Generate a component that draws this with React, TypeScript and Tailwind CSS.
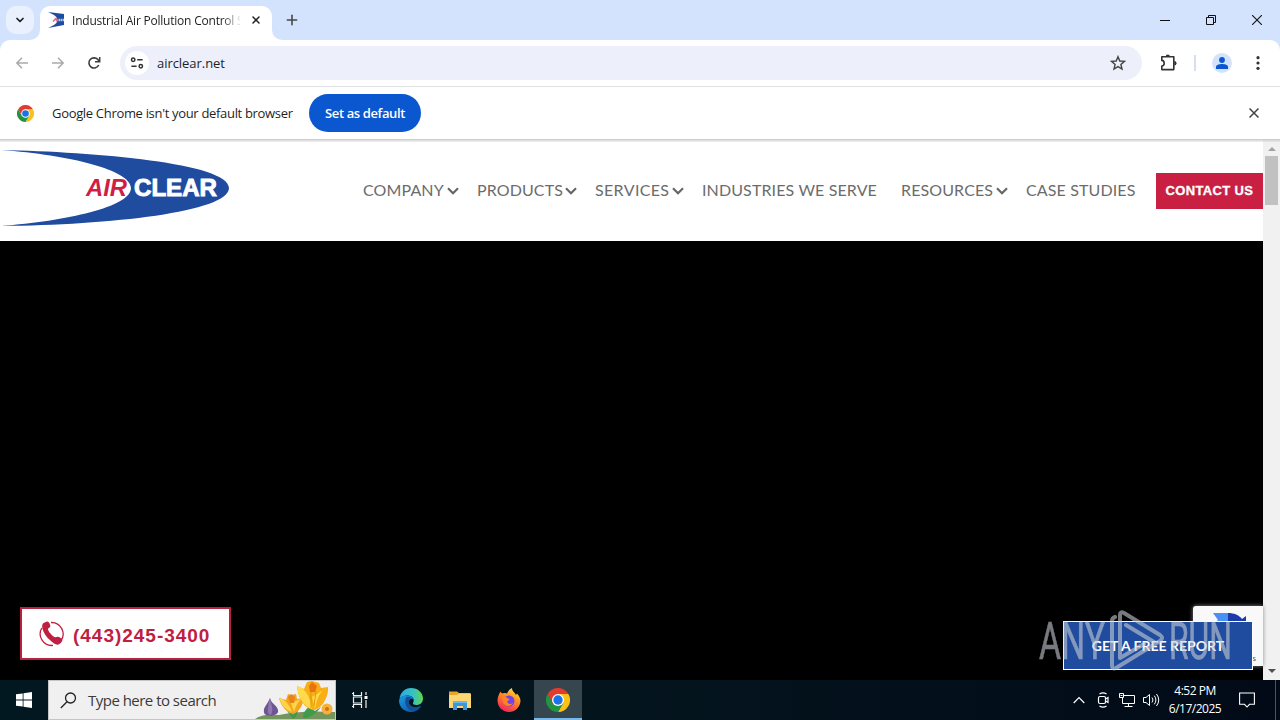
import { ChevronDown, Plus, X } from 'lucide-react';

const NAV = [
  { label: 'COMPANY', menu: true, cell: 'w-[114px]', text: 'w-[82px]' },
  { label: 'PRODUCTS', menu: true, cell: 'w-[118px]', text: 'w-[86px]' },
  { label: 'SERVICES', menu: true, cell: 'w-[107px]', text: 'w-[75px] tracking-[0.35px]' },
  { label: 'INDUSTRIES WE SERVE', menu: false, cell: 'w-[199px]', text: 'w-[175px]' },
  { label: 'RESOURCES', menu: true, cell: 'w-[125px]', text: 'w-[93px]' },
  { label: 'CASE STUDIES', menu: false, cell: 'w-[130px]', text: 'w-[110px]' },
];

function AirClearMark({ className }: { className: string }) {
  return (
    <svg className={className} viewBox="0 0 230 78" preserveAspectRatio="none">
      <path d="M1 1C95 3 229 14 229 39C229 63 110 76 1 77C66 72 131 58 131 39C131 21 70 6 1 1Z" fill="#1f4c9f" />
      <text x="86" y="47" textLength="41" lengthAdjust="spacingAndGlyphs" fontFamily="Liberation Sans, sans-serif" fontSize="23" fontWeight="700" fontStyle="italic" fill="#d01f45">AIR</text>
      <text x="134" y="47" textLength="83" lengthAdjust="spacingAndGlyphs" fontFamily="Liberation Sans, sans-serif" fontSize="23" fontWeight="700" fill="#fff" stroke="#fff" strokeWidth=".9">CLEAR</text>
    </svg>
  );
}

function ChromeLogo({ className }: { className: string }) {
  return (
    <svg className={className} viewBox="0 0 48 48">
      <path d="M24 12H44.8A24 24 0 0 1 24 48L34.4 30Z" fill="#fbc116" />
      <path d="M13.6 30L3.2 12A24 24 0 0 0 24 48L34.4 30Z" fill="#229342" />
      <path d="M3.2 12A24 24 0 0 1 44.8 12H24L13.6 30Z" fill="#e33b2e" />
      <circle cx="24" cy="24" r="12" fill="#fff" />
      <circle cx="24" cy="24" r="9.4" fill="#1a73e8" />
    </svg>
  );
}

function TabStrip() {
  return (
    <div className="h-10 bg-[#d3e3fd] flex items-start">
      <div className="ml-1.5 mt-1.5 w-7 h-7 rounded-[10px] bg-[#e9f1fe] flex items-center justify-center">
        <ChevronDown className="w-3 h-3 text-[#1f1f1f]" strokeWidth={3.5} />
      </div>
      <div className="ml-1.5 mt-1.5 w-[232px] h-[34px] rounded-t-[10px] bg-white flex items-center relative">
        <svg className="absolute -left-2.5 bottom-0 w-2.5 h-2.5" viewBox="0 0 10 10"><path d="M10 0V10H0A10 10 0 0 0 10 0Z" fill="#fff" /></svg>
        <svg className="absolute -right-2.5 bottom-0 w-2.5 h-2.5" viewBox="0 0 10 10"><path d="M0 0V10H10A10 10 0 0 1 0 0Z" fill="#fff" /></svg>
        <svg className="ml-2 mb-1.5 w-4 h-4" viewBox="0 0 16 16">
          <path d="M0 0L16 2V13L0 16C6 13.5 9.5 11 9.5 8C9.5 5 6 2.5 0 0Z" fill="#1f4c9f" />
          <path d="M5 9.5L8 6.5L9 9.5" fill="none" stroke="#dd6b83" strokeWidth="1.6" />
          <path d="M10.5 8H16" stroke="#b9c8e8" strokeWidth="2.6" strokeDasharray="1.6 .5" />
        </svg>
        <div className="ml-2 mb-1 w-[168px] overflow-hidden whitespace-nowrap text-[12px] leading-4 tracking-[-0.22px] text-[#1f1f1f] [mask-image:linear-gradient(to_right,#000_150px,transparent_170px)]">
          Industrial Air Pollution Control Systems
        </div>
        <X className="ml-2.5 mb-1.5 w-3 h-3 text-[#1f1f1f]" strokeWidth={3} />
      </div>
      <Plus className="ml-3 mt-3 w-4 h-4 text-[#474747]" strokeWidth={2.4} />
      <div className="ml-auto flex items-center h-10 mr-[18px] gap-9">
        <svg className="w-2.5 h-2.5" viewBox="0 0 10 10"><path d="M0 5.5H10" stroke="#111" /></svg>
        <svg className="w-2.5 h-2.5" viewBox="0 0 10 10"><path d="M.5 2.5H7.5V9.5H.5ZM2.5 2.5V.5H9.5V7.5H7.5" fill="none" stroke="#111" /></svg>
        <svg className="w-2.5 h-2.5" viewBox="0 0 10 10"><path d="M0 0L10 10M10 0L0 10" stroke="#111" strokeWidth="1.1" /></svg>
      </div>
    </div>
  );
}

function Toolbar() {
  return (
    <div className="bg-[#d3e3fd]">
      <div className="h-[47px] bg-white rounded-t-[10px] border-b border-[#dfe1e5] flex items-center">
        <svg className="ml-4 w-3 h-3" viewBox="0 0 12 12"><path d="M12 6H1M6 .8L.9 6L6 11.2" fill="none" stroke="#a9abae" strokeWidth="1.5" /></svg>
        <svg className="ml-6 w-3 h-3" viewBox="0 0 12 12"><path d="M0 6H11M6 .8L11.1 6L6 11.2" fill="none" stroke="#a9abae" strokeWidth="1.5" /></svg>
        <svg className="ml-6 w-3 h-3 overflow-visible" viewBox="0 0 12 12">
          <path d="M10.7 8A5.1 5.1 0 1 1 9.9 2.6L11.6 4.3" fill="none" stroke="#3c3c3c" strokeWidth="1.6" />
          <path d="M11.7 0V4.7H7" fill="none" stroke="#3c3c3c" strokeWidth="1.5" />
        </svg>
        <div className="ml-5 w-[1022px] h-[34px] rounded-full bg-[#edf0fa] flex items-center">
          <div className="ml-[5px] w-6 h-6 rounded-full bg-white flex items-center justify-center">
            <svg className="w-3.5 h-3.5" viewBox="0 0 14 14" fill="none" stroke="#333" strokeWidth="1.5">
              <circle cx="3.2" cy="3.8" r="1.7" /><path d="M7.2 3.8H12.6M1.4 10.2H6.6" /><circle cx="10.8" cy="10.2" r="1.7" />
            </svg>
          </div>
          <span className="ml-2 text-[13px] leading-4 tracking-[-0.05px] text-[#1f1f1f]">airclear.net</span>
          <svg className="ml-auto mr-4 w-4 h-4" viewBox="0 0 16 16">
            <path d="M8 1.7L9.8 6L14.5 6.4L10.9 9.5L12 14.1L8 11.6L4 14.1L5.1 9.5L1.5 6.4L6.2 6Z" fill="none" stroke="#444" strokeWidth="1.4" />
          </svg>
        </div>
        <svg className="ml-[17px] w-[18px] h-[18px]" viewBox="0 0 18 18">
          <path d="M2.8 2.8H14.8V15.6H2.8V12C4.6 11.8 5.2 10.6 5.2 9.2S4.6 6.600 2.8 6.4Z" fill="none" stroke="#333" strokeWidth="1.6" strokeLinejoin="round" />
          <path d="M6.7 2.6A2.1 2.1 0 0 1 10.9 2.6Z" fill="#333" />
          <path d="M15.3 7A2.2 2.2 0 0 1 15.3 11.4Z" fill="#333" />
        </svg>
        <div className="ml-[17px] w-0.5 h-4 bg-[#d6def0]" />
        <div className="ml-4 w-5 h-5 rounded-full bg-[#d3e3fd] flex items-center justify-center">
          <svg className="w-3 h-3" viewBox="0 0 12 12" fill="#0b57d0"><circle cx="6" cy="3" r="2.9" /><path d="M0 12V10C0 7.8 3.5 7 6 7S12 7.8 12 10V12Z" /></svg>
        </div>
        <svg className="ml-6 w-1 h-3.5" viewBox="0 0 4 14" fill="#333"><circle cx="2" cy="1.7" r="1.6" /><circle cx="2" cy="7" r="1.6" /><circle cx="2" cy="12.3" r="1.6" /></svg>
      </div>
    </div>
  );
}

function DefaultBrowserBar() {
  return (
    <div className="h-[52px] bg-white flex items-center">
      <ChromeLogo className="ml-[17px] w-[17px] h-[17px]" />
      <span className="ml-[18px] mt-0.5 w-[241px] whitespace-nowrap text-[13px] tracking-[-0.32px] text-[#1f1f1f]">Google Chrome isn't your default browser</span>
      <button className="ml-4 pt-0.5 w-28 h-[38px] rounded-full bg-[#0b57d0] text-white text-[13px] font-semibold tracking-[-0.38px] whitespace-nowrap">Set as default</button>
      <svg className="ml-auto mr-[21px] w-2.5 h-2.5" viewBox="0 0 10 10"><path d="M.5 .5L9.5 9.5M9.5 .5L.5 9.5" stroke="#444" strokeWidth="1.5" /></svg>
    </div>
  );
}

function SiteHeader() {
  return (
    <div className="h-[101px] bg-white flex items-center font-[Lato,sans-serif]">
      <AirClearMark className="w-[230px] h-[78px] mb-[5px] shrink-0" />
      <nav className="ml-[133px] mb-0.5 flex">
        {NAV.map(item => (
          <div key={item.label} className={`${item.cell} shrink-0 flex items-center whitespace-nowrap text-[16px] leading-5 tracking-[0.12px] text-[#6c6c6c]`}>
            <span className={item.text}>{item.label}</span>
            {item.menu && (
              <svg className="ml-0.5 mt-[3px] w-3 h-2 shrink-0" viewBox="0 0 12 8"><path d="M1 1.3L6 6.3L11 1.3" fill="none" stroke="#666" strokeWidth="2.2" /></svg>
            )}
          </div>
        ))}
      </nav>
      <div className="w-[107px] h-9 shrink-0 bg-[#c91f42] text-white text-[13px] font-bold font-['Liberation_Sans',sans-serif] flex items-center justify-center whitespace-nowrap tracking-[0.35px] [-webkit-text-stroke:0.3px_white]">
        CONTACT US
      </div>
    </div>
  );
}

function PhoneButton() {
  return (
    <div className="absolute left-5 bottom-5 w-[211px] h-[53px] bg-white border-2 border-[#b8203f] flex items-center text-[#c02040]">
      <svg className="ml-[17px] w-[25px] h-[26px] shrink-0" viewBox="0 0 25 26">
        <path d="M12 1.5A11.6 11.6 0 0 1 21.8 20M14 24.4A11.6 11.6 0 0 1 2.8 7" fill="none" stroke="currentColor" strokeWidth="1.3" />
        <path d="M4.500 2L8 .6C10 .3 11.600 4 11.300 5.500C11 6.800 8.800 7 8.900 8.200C9.500 11 13.500 15 16 16.200C17.200 16.700 17.800 15.500 19 15.800C21 16.200 23.700 18 23.300 19.600C22.600 21.500 20.500 23.800 18.500 23.700C16 23.400 13.500 21.500 11.500 19.500C7.500 16 4.500 12 3.400 7.400C3 5.400 3 3 4.500 2Z" fill="currentColor" />
      </svg>
      <span className="ml-[9px] mt-1 text-[19px] leading-6 font-bold tracking-[0.98px] whitespace-nowrap font-['Liberation_Sans',sans-serif]">(443)245-3400</span>
    </div>
  );
}

function RecaptchaBadge() {
  return (
    <div className="absolute right-0 bottom-3.5 w-[70px] h-[60px] bg-[#f9f9f9] rounded-l-[3px] shadow-[0_0_4px_#888]">
      <svg className="ml-[19px] mt-1.5 w-9 h-8" viewBox="0 0 36 32">
        <path d="M1 1H17V12H1L6 8Z" fill="#4a90f4" />
        <path d="M16 1C22 1 27 3 30 7L34 4V18H19L24 13C22 11 20 10 16 10Z" fill="#1c3aa9" />
      </svg>
      <span className="absolute right-[7px] bottom-0.5 text-[8px] leading-3 text-[#555]">Terms</span>
    </div>
  );
}

function Watermark() {
  return (
    <svg className="absolute left-[1036px] bottom-2 w-[200px] h-[64px] opacity-60" viewBox="0 0 200 64" fill="#c8ccd4">
      <text x="3" y="51" textLength="66" lengthAdjust="spacingAndGlyphs" fontFamily="Roboto, sans-serif" fontSize="51" stroke="#c8ccd4" strokeWidth=".6">ANY</text>
      <text x="133" y="51" textLength="63" lengthAdjust="spacingAndGlyphs" fontFamily="Roboto, sans-serif" fontSize="51" stroke="#c8ccd4" strokeWidth=".6">RUN</text>
      <path
        d="M84 50V7Q84 3 88 5L124 27Q128 30 124 33L80 60Q76 62 76 57V13Q76 10 79 9M90 17L118 34M84 50L108 36"
        fill="none" stroke="#c8ccd4" strokeWidth="4" strokeLinejoin="round" strokeLinecap="round"
      />
    </svg>
  );
}

function Scrollbar() {
  return (
    <div className="w-[17px] bg-[#f1f1f1] flex flex-col items-center">
      <svg className="mt-[7px] w-2 h-1.5 shrink-0" viewBox="0 0 8 6"><path d="M0 5L4 1L8 5Z" fill="#a3a3a3" /></svg>
      <div className="mt-1 w-[13px] h-[49px] bg-[#c1c1c1]" />
      <svg className="mt-auto mb-1.5 w-2 h-1.5" viewBox="0 0 8 6"><path d="M0 1L4 5L8 1Z" fill="#505050" /></svg>
    </div>
  );
}

function SearchFlowers() {
  return (
    <svg className="ml-auto w-20 h-[38px]" viewBox="0 0 80 38">
      <path d="M0 38Q8 32 24 34Q46 29 80 31V38Z" fill="#74965e" />
      <path d="M48 37Q48 30 54 26L60 30L66 26Q60 34 52 37ZM32 30L38 34L43 29Q42 36 38 38Z" fill="#3f9a4b" />
      <path d="M15 17C16 23 24 25 23 31C21 36 9 36 9 31C8 26 13 23 15 17Z" fill="#6d5593" />
      <path d="M15 17C16 24 19 28 16 34C11 34 13 25 15 17Z" fill="#8f78b0" />
      <path d="M24 17L31 19L33 13L36 14L41 13L42 18L48 17C49 24 43 32 38 33C31 31 26 25 24 17Z" fill="#f2a51d" />
      <path d="M24 17C29 18 34 22 37 31C31 29 26 24 24 17ZM48 17C44 19 41 24 39 31L36 22Z" fill="#ffd447" />
      <path d="M33 16L36 13L40 16L39 22H35Z" fill="#e8831a" />
      <path d="M42 5L49 8L52 1L57 0L64 2L66 7L73 6C74 15 67 28 59 29C50 28 43 18 42 5Z" fill="#f8ae14" />
      <path d="M42 5C50 7 55 15 57 28C49 25 43 17 42 5ZM73 6C66 9 62 16 60 28L57 16Z" fill="#ffdb4b" />
      <path d="M54 5L57 1L62 5L60 11H55Z" fill="#e8730f" />
      <path d="M56 11V27M61 10L59 25" stroke="#e5950f" />
      <circle cx="72" cy="28" r="5.5" fill="#f5b13a" /><circle cx="72" cy="28" r="2" fill="#d66b1a" />
    </svg>
  );
}

function Taskbar() {
  return (
    <div className="h-10 bg-linear-to-r from-[#021820] via-[#04141d] to-[#020a18] flex text-white">
      <div className="w-12 flex items-center justify-center">
        <svg className="w-4 h-4" viewBox="0 0 16 16" fill="#fff"><path d="M0 2.3L6.7 1.4V7.6H0ZM7.5 1.3L16 0V7.6H7.5ZM0 8.4H6.7V14.6L0 13.7ZM7.5 8.4H16V16L7.5 14.7Z" /></svg>
      </div>
      <div className="w-72 bg-[#f0f0f0] border border-[#c5c5c5] flex items-center">
        <svg className="ml-[11px] w-[17px] h-[17px]" viewBox="0 0 17 17"><circle cx="10.5" cy="6" r="5" fill="none" stroke="#222" strokeWidth="1.3" /><path d="M7 9.8L.8 16" stroke="#222" strokeWidth="1.3" /></svg>
        <span className="ml-[11px] text-[15px] leading-5 tracking-[-0.52px] text-[#3a3a3a] whitespace-nowrap">Type here to search</span>
        <SearchFlowers />
      </div>
      <div className="w-12 flex items-center justify-center">
        <svg className="w-4 h-4" viewBox="0 0 16 16" fill="none" stroke="#eee" strokeWidth="1.2"><path d="M0 1.5H2M0 14.5H2M1.5 0V3.5H9.5V0M1.5 5H9.5V11H1.5ZM1.5 16V12.5H9.5V16M14 0V3M14 8V16" /><path d="M12.5 4H15.5V7H12.5Z" fill="#fff" stroke="none" /></svg>
      </div>
      <div className="ml-[15px] w-6 flex items-center">
        <svg className="w-6 h-6" viewBox="0 0 24 24">
          <defs>
            <linearGradient id="edgeTop" x1="0" x2="1"><stop offset="0" stopColor="#2aa9e0" /><stop offset=".55" stopColor="#35c1c8" /><stop offset="1" stopColor="#62d64f" /></linearGradient>
            <linearGradient id="edgeLow" x1="0" y1="0" x2="1" y2="1"><stop offset="0" stopColor="#1b9de2" /><stop offset="1" stopColor="#0c4a9a" /></linearGradient>
          </defs>
          <path d="M.5 11C1 4.5 6 0 12 0C19 0 24 5 24 10.5C24 15 20.5 17 17.5 17C15 17 13.7 16 14 15C15.5 13 15 8 9.5 7.5C5 7.2 1.5 9 .5 11Z" fill="url(#edgeTop)" />
          <path d="M0 12.5C1 8.5 5 7.3 9 7.4C12 7.6 14.5 9.5 14.8 11.5C12.5 9.5 9 12 10 15.5C11 19 16 20.5 22 18C20 21.5 16 24 12 24C5 24 0 19 0 12.5Z" fill="url(#edgeLow)" />
          <path d="M7.5 9C4.5 13 6.5 21 14 23.7C18 23.2 20.5 21 22 18C16 20.5 11 19 10 15.5C9.5 13 10.5 11 12.5 10.5C11.5 9 9.5 8.5 7.5 9Z" fill="#124f97" />
        </svg>
      </div>
      <div className="ml-[26px] w-6 flex items-center">
        <svg className="w-[22px] h-5" viewBox="0 0 22 20">
          <path d="M0 1.5H8L10 3H21V18H0Z" fill="#e9a52b" /><path d="M0 5H8L10 3.5H22V18H0Z" fill="#fbd673" />
          <path d="M4 20V11H18V20H14V16H8V20Z" fill="#3e95d8" /><path d="M4 11H18V13H4Z" fill="#6ab9ec" />
        </svg>
      </div>
      <div className="ml-6 w-6 flex items-center">
        <svg className="w-6 h-6" viewBox="0 0 24 24">
          <defs><linearGradient id="fox" x1=".8" y1="0" x2=".3" y2="1"><stop offset="0" stopColor="#ffe43a" /><stop offset=".45" stopColor="#ff8a22" /><stop offset="1" stopColor="#f5215d" /></linearGradient></defs>
          <path d="M3.5 3.5C4 5 5 5.5 6.5 5.3C8 4.8 9 5 10 5.5C11 3.5 12.5 1 15 0C15 3.5 18 4.5 19 7L20 5.5C22.5 8 23.5 11 23.5 13C23 19.5 18 24 12 24C5.5 24 .5 19 .5 12.5C.5 9 2 6 3.5 3.5Z" fill="url(#fox)" />
          <circle cx="12" cy="13" r="5.5" fill="#7542e5" />
          <path d="M5 9C7 8 9 9 11 10.5C13 10.5 13 12 10.5 13C9.5 15.5 13 17 16 15C14 19 8 19 6 14.5Z" fill="#ff8128" />
        </svg>
      </div>
      <div className="ml-[13px] w-12 bg-[#35464f] border-b-2 border-[#76b9ed] flex items-center justify-center">
        <ChromeLogo className="mt-0.5 w-6 h-6" />
      </div>
      <div className="ml-auto flex items-center">
        <svg className="w-3 h-2" viewBox="0 0 12 8"><path d="M.7 7L6 1.5L11.3 7" fill="none" stroke="#fff" strokeWidth="1.2" /></svg>
        <svg className="ml-3 w-3 h-4" viewBox="0 0 12 16" fill="none" stroke="#fff" strokeWidth="1.2"><path d="M2.5 2Q6-.4 9.5 2M2.5 14Q6 16.4 9.5 14" /><rect x="1.5" y="4.5" width="7" height="7" rx="1.5" /><path d="M8.5 7L11 5.500V10.500L8.500 9" /></svg>
        <svg className="ml-2.5 w-4 h-4" viewBox="0 0 16 16" fill="none" stroke="#fff"><path d="M5 3.5H15.5V11.5H3.5V6M9.5 11.5V14.5M5.5 14.5H13.5M.5 1.5H4.5V5.5H.5ZM1.5 3.5H3.5" /></svg>
        <svg className="ml-2 w-[17px] h-4" viewBox="0 0 17 16" fill="none" stroke="#fff"><path d="M.5 5.5H3L6.5 2.5V13.5L3 10.5H.5ZM9 5.5Q11 8 9 10.5M11.3 3.7Q14.5 8 11.3 12.3M13.5 2Q18 8 13.5 14" /></svg>
        <div className="ml-2 w-[54px] text-center text-[12px] leading-[18px] tracking-[-0.5px] whitespace-nowrap">
          <div>4:52 PM</div>
          <div>6/17/2025</div>
        </div>
        <svg className="ml-[17px] w-4 h-4" viewBox="0 0 16 16"><path d="M.6 1H15.4V12.3H10.5L8 15L5.5 12.3H.6Z" fill="none" stroke="#fff" strokeWidth="1.1" /></svg>
        <div className="ml-5 mr-1 w-px h-10 bg-[#4a5560]" />
      </div>
    </div>
  );
}

export default function App() {
  return (
    <div className="w-[1280px] h-[720px] overflow-hidden flex flex-col bg-white font-['Open_Sans',sans-serif]">
      <TabStrip />
      <Toolbar />
      <DefaultBrowserBar />
      <div className="h-[541px] flex relative">
        <div className="absolute z-10 inset-x-0 top-0 h-[3px] bg-linear-to-b from-[#c8c8c8] to-[#c8c8c8]/20" />
        <div className="w-[1263px] bg-black flex flex-col relative">
          <div className="h-px bg-white" />
          <SiteHeader />
          <PhoneButton />
          <RecaptchaBadge />
          <div className="absolute right-2.5 bottom-2.5 w-[190px] h-[49px] bg-[#1f4c9f] border border-white text-white text-[14px] font-bold font-[Lato,sans-serif] flex items-center justify-center whitespace-nowrap">
            GET A FREE REPORT
          </div>
          <Watermark />
        </div>
        <Scrollbar />
      </div>
      <Taskbar />
    </div>
  );
}
